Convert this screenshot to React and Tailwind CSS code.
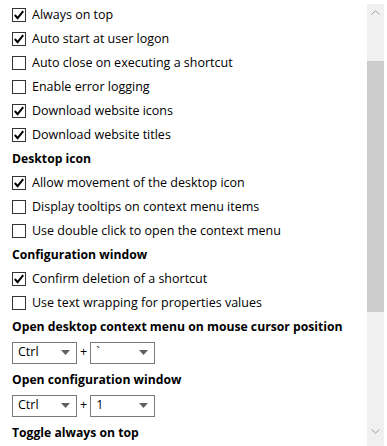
import React from 'react';

const Check = ({ checked, label }) => (
  <div className="flex items-center h-6">
    <span className="w-[14px] h-[14px] border border-[#333] bg-white flex items-center justify-center mr-[6px]">
      {checked && (
        <svg width="12" height="12" viewBox="0 0 12 12">
          <path d="M1.8 6 L4.6 9.2 L10.2 2.2" fill="none" stroke="#000" strokeWidth="2" />
        </svg>
      )}
    </span>
    <span className="text-[12.5px]">{label}</span>
  </div>
);

const Heading = ({ children }) => (
  <div className="flex items-center h-6 font-bold text-[12.2px]">{children}</div>
);

const Select = ({ value }) => (
  <div className="w-[65px] h-[22px] border border-[#7a7a7a] bg-white flex items-center justify-between pl-[5px] pr-[6px] text-[12.5px]">
    <span>{value}</span>
    <svg width="9" height="5" viewBox="0 0 9 5">
      <path d="M0 0 L9 0 L4.5 5 Z" fill="#606060" />
    </svg>
  </div>
);

const Hotkey = ({ mod, key2 }) => (
  <div className="flex items-center h-[29px] pb-[2px]">
    <Select value={mod} />
    <span className="mx-[3px] text-[12.5px]">+</span>
    <Select value={key2} />
  </div>
);

const App = () => {
  return (
    <div className="w-[387px] h-[446px] bg-white flex overflow-hidden text-[12px] text-black font-['Open_Sans','Liberation_Sans',sans-serif]">
      <div className="flex-1 pl-3 pt-[3px]">
        <Check checked label="Always on top" />
        <Check checked label="Auto start at user logon" />
        <Check label="Auto close on executing a shortcut" />
        <Check label="Enable error logging" />
        <Check checked label="Download website icons" />
        <Check checked label="Download website titles" />
        <Heading>Desktop icon</Heading>
        <Check checked label="Allow movement of the desktop icon" />
        <Check label="Display tooltips on context menu items" />
        <Check label="Use double click to open the context menu" />
        <Heading>Configuration window</Heading>
        <Check checked label="Confirm deletion of a shortcut" />
        <Check label="Use text wrapping for properties values" />
        <Heading>Open desktop context menu on mouse cursor position</Heading>
        <Hotkey mod="Ctrl" key2="`" />
        <Heading>Open configuration window</Heading>
        <Hotkey mod="Ctrl" key2="1" />
        <Heading>Toggle always on top</Heading>
      </div>
      <div className="w-[17px] mr-[3px] mt-1 bg-[#f0f0f0] flex flex-col">
        <div className="h-[17px] flex items-center justify-center">
          <svg width="9" height="5" viewBox="0 0 9 5">
            <path d="M0.5 4.5 L4.5 0.8 L8.5 4.5" fill="none" stroke="#a0a0a0" strokeWidth="1" />
          </svg>
        </div>
        <div className="h-[40px]" />
        <div className="h-[251px] bg-[#cdcdcd]" />
        <div className="flex-1" />
        <div className="h-[17px] mb-[6px] flex items-center justify-center">
          <svg width="9" height="5" viewBox="0 0 9 5">
            <path d="M0.5 0.5 L4.5 4.2 L8.5 0.5" fill="none" stroke="#a0a0a0" strokeWidth="1" />
          </svg>
        </div>
      </div>
    </div>
  );
};

export default App;
